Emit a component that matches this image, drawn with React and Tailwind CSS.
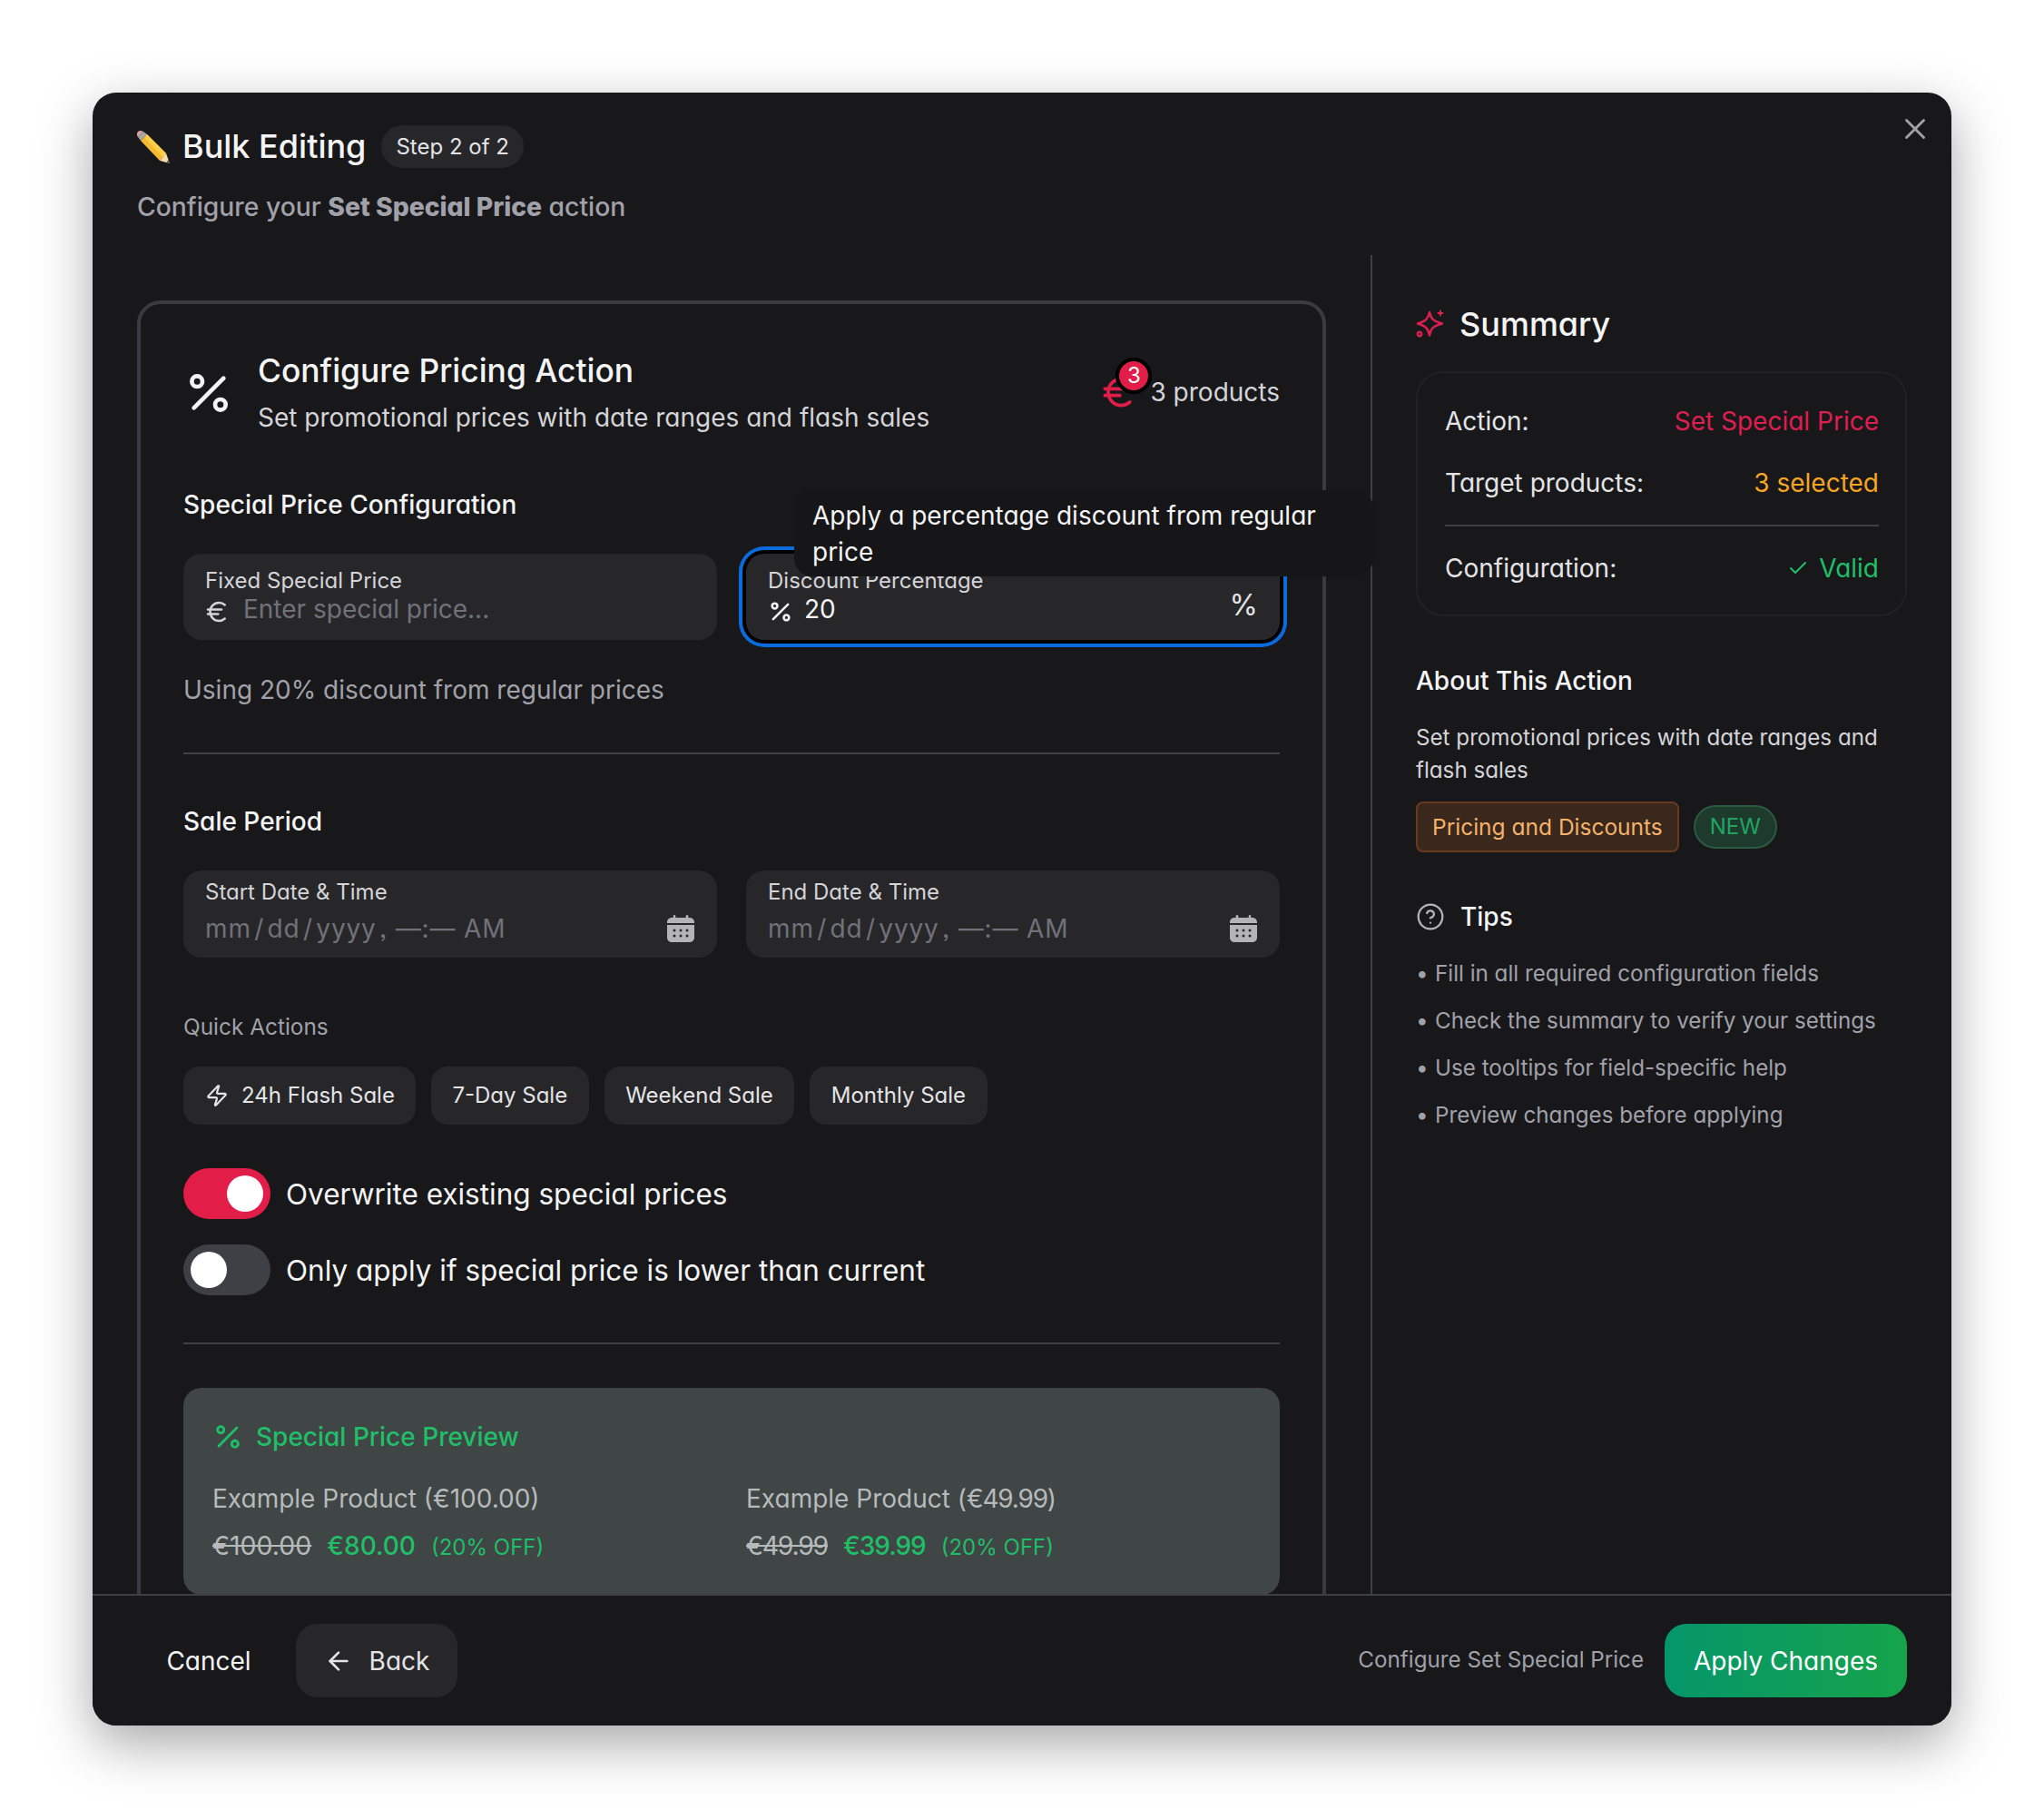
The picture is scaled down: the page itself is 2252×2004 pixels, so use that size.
import { ArrowLeft, Check, CircleHelp, Euro, Percent, X, Zap } from "lucide-react";

function PencilIcon() {
  return (
    <svg viewBox="0 0 38 38" className="w-[38px] h-[38px] shrink-0 -ml-[1px]">
      <path d="M8 2 2 8C.5 6 .5 3.500 2 2 3.500.5 6 .5 8 2z" fill="#d99e9e" />
      <path d="M8 2 2 8l3 4 7-7z" fill="#a8a8a8" />
      <path d="M12 5 5 12l21 22 7-8z" fill="#f5b82e" />
      <path d="M12 5 9 8.200 29.500 30 33 26z" fill="#fbcf4a" />
      <path d="M26 34l7-8 4 11z" fill="#f3dca8" />
      <path d="M33.500 36 36 32.500 37 37z" fill="#4a4a4a" />
    </svg>
  );
}

function SparkIcon() {
  return (
    <svg viewBox="0 0 32 32" fill="none" stroke="#df1f4f" strokeWidth="2.4" strokeLinejoin="round" strokeLinecap="round" className="w-[32px] h-[32px] shrink-0">
      <path d="M15 3c1.500 7 4 10 14 12.500-10 2.500-12.500 5.500-14 13-1.500-7.500-4-10.500-13-13 9-2.500 11.500-5.500 13-12.500z" />
      <path d="M27 1.500v5M24.500 4h5" strokeWidth="2" />
      <circle cx="4" cy="27" r="2.200" />
    </svg>
  );
}

function CalendarIcon() {
  return (
    <svg viewBox="0 0 30 30" className="w-[30px] h-[30px] shrink-0" fill="#b4b4b8">
      <path d="M8 0c.8 0 1.300.6 1.300 1.300V3h11.400V1.300C20.700.6 21.200 0 22 0s1.300.6 1.300 1.300V3H25c2.800 0 5 2.200 5 5v1H0V8c0-2.800 2.200-5 5-5h1.700V1.300C6.700.6 7.200 0 8 0z" />
      <path fillRule="evenodd" d="M0 11h30v14c0 2.800-2.200 5-5 5H5c-2.800 0-5-2.200-5-5V11zm8 4.500a1.500 1.500 0 1 0 0 3 1.500 1.500 0 0 0 0-3zm7 0a1.500 1.500 0 1 0 0 3 1.500 1.500 0 0 0 0-3zm7 0a1.500 1.500 0 1 0 0 3 1.500 1.500 0 0 0 0-3zm-14 6a1.500 1.500 0 1 0 0 3 1.500 1.500 0 0 0 0-3zm7 0a1.500 1.500 0 1 0 0 3 1.500 1.500 0 0 0 0-3zm7 0a1.500 1.500 0 1 0 0 3 1.500 1.500 0 0 0 0-3z" />
    </svg>
  );
}

function DateField({ label }) {
  return (
    <div className="h-[96px] bg-[#27272a] rounded-[20px] pl-[24px] pr-[25px] pt-[10px]">
      <div className="text-[24px] leading-[28px] text-[#d4d4d8]">{label}</div>
      <div className="mt-[7px] flex items-center justify-between">
        <span className="text-[28px] leading-[38px] text-[#71717a] tracking-[0.85px]">mm{"\u200a"}/{"\u200a"}dd{"\u200a"}/{"\u200a"}yyyy{"\u200a"}, —:— AM</span>
        <CalendarIcon />
      </div>
    </div>
  );
}

function Toggle({ on, label }) {
  return (
    <div className="flex items-center gap-[17px]">
      <div className={`w-[96px] h-[56px] rounded-full flex items-center px-[8px] ${on ? "bg-[#e11d48] justify-end" : "bg-[#3f3f46] justify-start"}`}>
        <div className="w-[40px] h-[40px] rounded-full bg-white" />
      </div>
      <span className="text-[31.5px] leading-[44px] mt-[2px] text-[#f4f4f5]">{label}</span>
    </div>
  );
}

function PreviewItem({ name, regular, was, now, tight }) {
  return (
    <div>
      <div className="text-[28px] leading-[40px] text-[#b6baba]">
        {name} (<span className={tight ? "tracking-[-1.2px]" : ""}>{regular}</span>)
      </div>
      <div className="mt-[12px] flex items-baseline">
        <span className={`text-[28.5px] leading-[40px] text-[#b6baba] line-through ${tight ? "tracking-[-1.3px]" : ""}`}>{was}</span>
        <span className={`ml-[17px] text-[28px] leading-[40px] text-[#1fbf68] font-medium ${tight ? "tracking-[-1px]" : ""}`}>{now}</span>
        <span className="ml-[17px] text-[24px] leading-[40px] text-[#1fbf68]">(20% OFF)</span>
      </div>
    </div>
  );
}

const TIPS = [
  "Fill in all required configuration fields",
  "Check the summary to verify your settings",
  "Use tooltips for field-specific help",
  "Preview changes before applying",
];

export default function App() {
  return (
    <div className="min-h-[2004px] bg-white pt-[102px] pl-[102px] font-['Inter',sans-serif] [font-feature-settings:'cv11','ss03']">
      <div className="relative w-[2048px] h-[1799px] bg-[#18181b] rounded-[26px] overflow-hidden flex flex-col shadow-[0_20px_60px_rgba(0,0,0,0.35)]">
        <X className="absolute top-[21px] right-[21px] w-[38px] h-[38px] text-[#a1a1aa]" strokeWidth={1.8} />

        {/* header */}
        <header className="h-[179px] shrink-0 pl-[49px] pt-[36px]">
          <div className="flex items-center h-[47px]">
            <PencilIcon />
            <h1 className="ml-[13px] text-[36px] leading-[47px] font-medium text-[#f4f4f5]">Bulk Editing</h1>
            <span className="ml-[17px] h-[47px] px-[16px] rounded-full bg-[#27272a] flex items-center text-[24px] text-[#e4e4e7]">Step 2 of 2</span>
          </div>
          <p className="mt-[23px] text-[28.3px] leading-[40px] font-medium text-[#a1a1aa]">
            Configure your <strong className="font-extrabold">Set Special Price</strong> action
          </p>
        </header>

        <div className="flex-1 flex min-h-0">
          {/* left column */}
          <div className="w-[1410px] shrink-0 pl-[49px] pr-[49px] pt-[50px] border-r-2 border-[#3f3f46]">
            <div className="border-[4px] border-[#3a3a40] rounded-[26px] px-[47px] pt-[52px] pb-[40px]">
              <div className="flex justify-between">
                <div className="flex">
                  <Percent className="w-[56px] h-[56px] mt-[18px] text-[#f4f4f5]" strokeWidth={2} />
                  <div className="ml-[26px]">
                    <h2 className="text-[35.4px] leading-[44px] font-medium text-[#f4f4f5]">Configure Pricing Action</h2>
                    <p className="mt-[9px] text-[28px] leading-[40px] text-[#d4d4d8]">Set promotional prices with date ranges and flash sales</p>
                  </div>
                </div>
                <div className="relative flex items-center h-[44px] mt-[23px]">
                  <div className="relative">
                    <Euro className="w-[44px] h-[44px] text-[#e11d48]" strokeWidth={2} />
                    <span className="absolute -top-[16px] left-[19px] w-[40px] h-[40px] rounded-full bg-[#e11d48] border-4 border-black flex items-center justify-center text-[24px] text-white">3</span>
                  </div>
                  <span className="ml-[13px] text-[28px] text-[#d4d4d8]">3 products</span>
                </div>
              </div>

              <h3 className="mt-[56px] text-[28px] leading-[40px] font-medium text-[#f4f4f5]">Special Price Configuration</h3>
              <div className="mt-[34px] grid grid-cols-2 gap-[32px]">
                <div className="h-[95px] bg-[#27272a] rounded-[20px] px-[24px] pt-[16px]">
                  <div className="text-[24px] leading-[28px] text-[#d4d4d8]">Fixed Special Price</div>
                  <div className="flex items-center h-[38px] -mt-[2px]">
                    <Euro className="w-[30px] h-[30px] mt-[6px] -ml-[2px] text-[#d4d4d8]" strokeWidth={2} />
                    <span className="ml-[14px] text-[28px] text-[#71717a]">Enter special price...</span>
                  </div>
                </div>
                <div className="relative h-[95px] bg-[#27272a] rounded-[20px] px-[24px] pt-[16px] shadow-[0_0_0_4px_#000,0_0_0_8px_#0a6cdc]">
                  <div className="text-[24px] leading-[28px] text-[#d4d4d8]">Discount Percentage</div>
                  <div className="flex items-center justify-between h-[38px] -mt-[2px]">
                    <div className="flex items-center">
                      <Percent className="w-[28px] h-[28px] mt-[6px] text-[#f4f4f5]" strokeWidth={2.2} />
                      <span className="ml-[12px] text-[28px] text-[#f4f4f5]">20</span>
                    </div>
                    <span className="text-[32px] -mt-[8px] text-[#e4e4e7]">%</span>
                  </div>
                  <div className="absolute z-10 left-[53px] -top-[70px] w-[638px] h-[95px] bg-[#161618] rounded-[20px] px-[20px] pt-[8px] text-[28px] leading-[40px] text-[#f4f4f5]">
                    Apply a percentage discount from regular price
                  </div>
                </div>
              </div>
              <p className="mt-[35px] text-[28px] leading-[40px] text-[#a1a1aa]">Using 20% discount from regular prices</p>
              <div className="mt-[49px] h-[2px] bg-[#3f3f46]" />

              <h3 className="mt-[54px] text-[28px] leading-[40px] font-medium text-[#f4f4f5]">Sale Period</h3>
              <div className="mt-[34px] grid grid-cols-2 gap-[32px]">
                <DateField label="Start Date & Time" />
                <DateField label="End Date & Time" />
              </div>

              <div className="mt-[58px] text-[24.4px] leading-[36px] text-[#a1a1aa]">Quick Actions</div>
              <div className="mt-[26px] flex gap-[17px] text-[24px] text-[#e4e4e7]">
                <button className="h-[64px] pl-[24px] pr-[23px] rounded-[18px] bg-[#27272a] flex items-center gap-[14px]">
                  <Zap className="w-[26px] h-[26px]" strokeWidth={2} />
                  24h Flash Sale
                </button>
                <button className="h-[64px] px-[23.5px] rounded-[18px] bg-[#27272a]">7-Day Sale</button>
                <button className="h-[64px] px-[23.5px] rounded-[18px] bg-[#27272a]">Weekend Sale</button>
                <button className="h-[64px] px-[23.5px] rounded-[18px] bg-[#27272a]">Monthly Sale</button>
              </div>

              <div className="mt-[48px] flex flex-col gap-[28px]">
                <Toggle on label="Overwrite existing special prices" />
                <Toggle label="Only apply if special price is lower than current" />
              </div>
              <div className="mt-[52px] h-[2px] bg-[#3f3f46]" />

              {/* preview box, runs under the footer */}
              <div className="mt-[48px] h-[228px] rounded-[20px] bg-[#404545] px-[32px] pt-[34px]">
                <div className="flex items-center gap-[14px] text-[28px] leading-[40px] font-medium text-[#1fbf68]">
                  <Percent className="w-[34px] h-[34px]" strokeWidth={2} />
                  Special Price Preview
                </div>
                <div className="mt-[28px] grid grid-cols-[588px_1fr]">
                  <PreviewItem name="Example Product" regular="€100.00" was="€100.00" now="€80.00" />
                  <PreviewItem name="Example Product" regular="€49.99" was="€49.99" now="€39.99" tight />
                </div>
              </div>
            </div>
          </div>

          {/* right column */}
          <aside className="flex-1 pl-[48px] pr-[49px] pt-[54px]">
            <div className="flex items-center gap-[16px]">
              <SparkIcon />
              <h2 className="text-[36px] leading-[44px] font-medium text-[#f4f4f5]">Summary</h2>
            </div>
            <div className="mt-[30px] h-[270px] rounded-[30px] border-2 border-[#212225] pl-[30px] pr-[29px] pt-[33px] text-[28px] leading-[40px] text-[#e4e4e7]">
              <div className="flex justify-between">
                <span>Action:</span>
                <span className="text-[#df1f4f]">Set Special Price</span>
              </div>
              <div className="mt-[28px] flex justify-between">
                <span>Target products:</span>
                <span className="text-[#f5a524]">3 selected</span>
              </div>
              <div className="mt-[26px] h-[2px] bg-[#3f3f46]" />
              <div className="mt-[26px] flex justify-between">
                <span>Configuration:</span>
                <span className="flex items-center gap-[11px] text-[#1fbf68]">
                  <Check className="w-[24px] h-[24px]" strokeWidth={2} />
                  Valid
                </span>
              </div>
            </div>

            <h3 className="mt-[51px] text-[28px] leading-[40px] font-medium text-[#f4f4f5]">About This Action</h3>
            <p className="mt-[25px] text-[24.2px] leading-[36px] text-[#d4d4d8]">Set promotional prices with date ranges and flash sales</p>
            <div className="mt-[16px] flex items-center gap-[16px]">
              <span className="h-[56px] px-[16px] rounded-[8px] bg-[#3a281c] border-2 border-[#67391e] flex items-center text-[24.5px] text-[#f5b26b]">Pricing and Discounts</span>
              <span className="h-[48px] px-[16px] rounded-full bg-[#1e3a2c] border-2 border-[#2a5a40] flex items-center text-[24px] text-[#1fa463]">NEW</span>
            </div>

            <div className="mt-[51px] flex items-center gap-[17px]">
              <CircleHelp className="w-[32px] h-[32px] text-[#b4b4b8]" strokeWidth={1.7} />
              <h3 className="text-[28px] leading-[40px] font-medium text-[#f4f4f5]">Tips</h3>
            </div>
            <ul className="mt-[25px] flex flex-col gap-[16px] text-[24.2px] leading-[36px] text-[#a1a1aa]">
              {TIPS.map((tip) => (
                <li key={tip} className="flex">
                  <span className="w-[21px]">•</span>
                  {tip}
                </li>
              ))}
            </ul>
          </aside>
        </div>

        {/* footer */}
        <footer className="relative z-20 h-[145px] shrink-0 bg-[#18181b] border-t-2 border-[#3f3f46] px-[49px] flex items-center justify-between">
          <div className="flex items-center">
            <button className="h-[81px] w-[158px] text-[28px] text-[#f4f4f5]">Cancel</button>
            <button className="ml-[17px] h-[81px] w-[178px] rounded-[24px] bg-[#27272a] flex items-center justify-center gap-[18px] text-[28px] text-[#e4e4e7]">
              <ArrowLeft className="w-[32px] h-[32px]" strokeWidth={2} />
              Back
            </button>
          </div>
          <div className="flex items-center gap-[23px]">
            <span className="text-[24.2px] text-[#a1a1aa]">Configure Set Special Price</span>
            <button className="h-[81px] w-[267px] rounded-[24px] bg-gradient-to-r from-[#059669] to-[#16a34a] text-[28px] text-white">Apply Changes</button>
          </div>
        </footer>
      </div>
    </div>
  );
}
